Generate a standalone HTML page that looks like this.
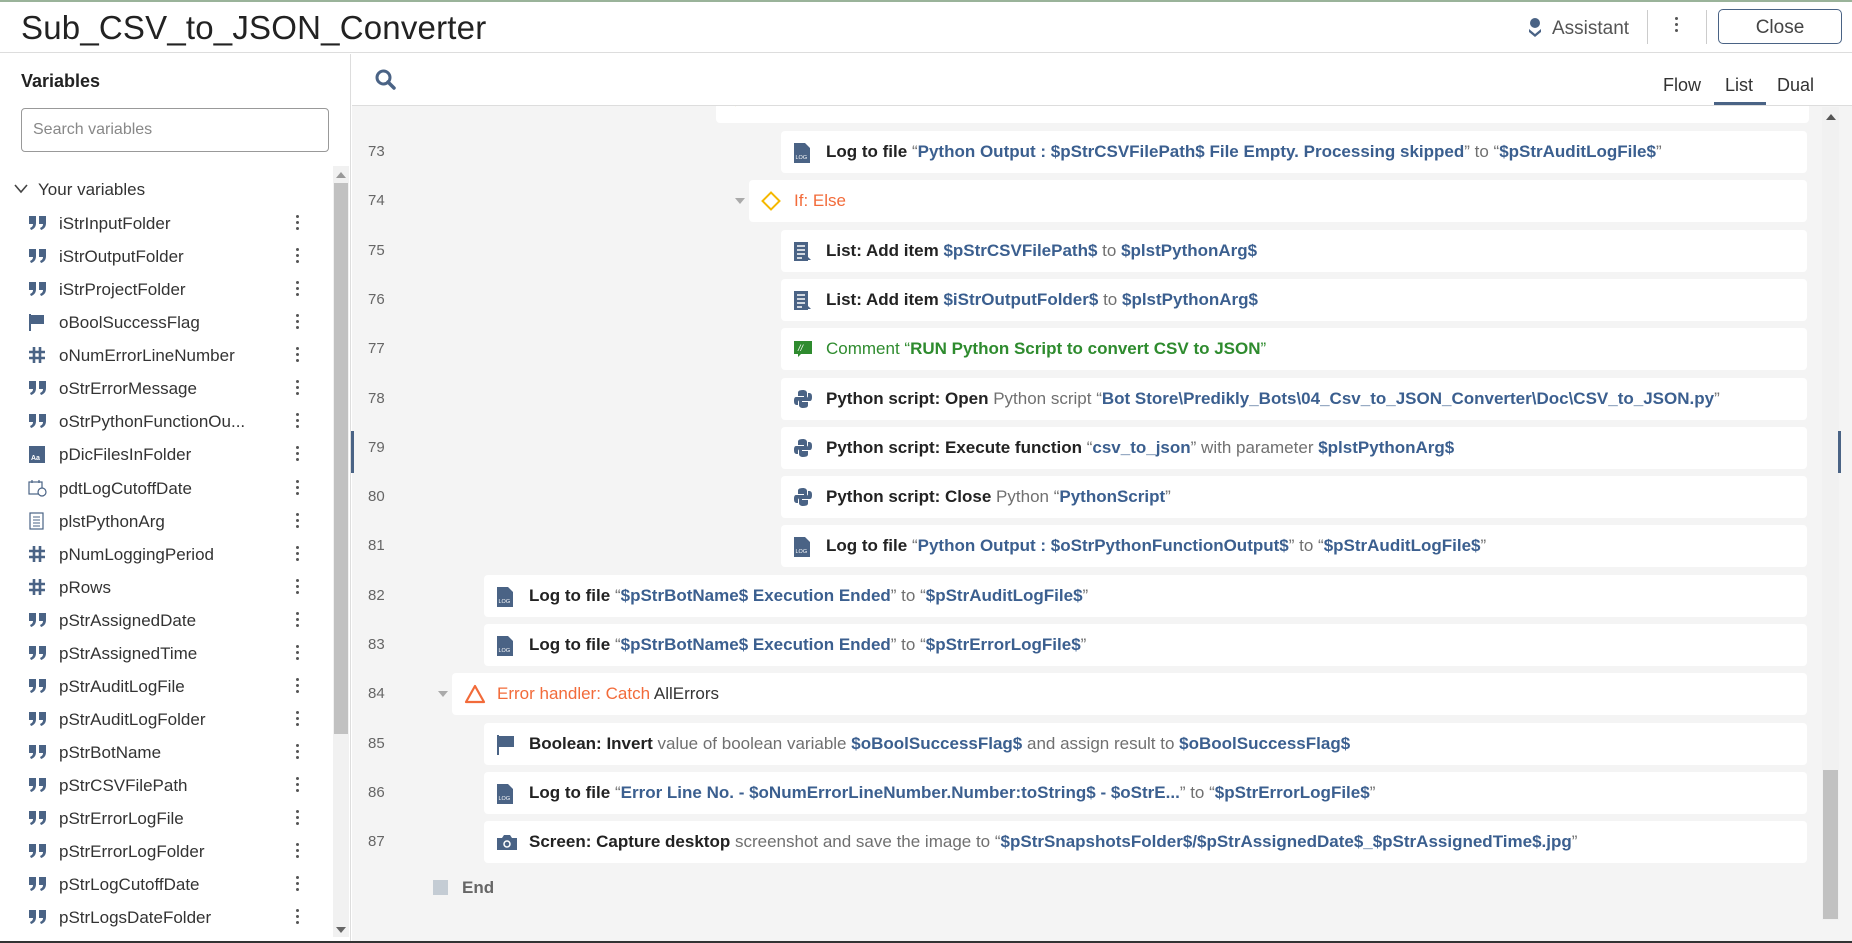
<!DOCTYPE html>
<html><head><meta charset="utf-8"><style>
*{box-sizing:border-box;margin:0;padding:0}
body{width:1852px;height:943px;overflow:hidden;background:#fff;font-family:"Liberation Sans",sans-serif;color:#2a2a2a;position:relative}
.a{position:absolute}
.topline{left:0;top:0;width:1852px;height:2px;background:#9ab39a}
.hdr{left:0;top:2px;width:1852px;height:51px;border-bottom:1px solid #ddd}
.title{left:21px;top:9px;font-size:33px;color:#222;letter-spacing:0.2px}
.side{left:0;top:54px;width:351px;height:889px;border-right:1px solid #ddd}
.vr{left:0;height:33px;width:330px;font-size:17px;color:#333}
.vr .ic{position:absolute;left:28px;top:8px;width:20px;height:18px;color:#4a6385;font-weight:bold;font-size:22px;line-height:18px}
.vr .nm{position:absolute;left:59px;top:8px}
.vr .dt{position:absolute;left:296px;top:9px;width:4px;height:16px}
.dt i{display:block;width:3px;height:3px;border-radius:50%;background:#555;margin-bottom:3px}
.main{left:352px;top:54px;width:1500px;height:889px;background:#f4f4f4}
.tool{left:352px;top:54px;width:1500px;height:52px;background:#fff;border-bottom:1px solid #ddd}
.ln{left:368px;font-size:15px;color:#666;width:30px}
.card{background:#fff;border-radius:4px;height:42px;right:45px;font-size:17px;white-space:nowrap}
.card .t{position:absolute;left:45px;top:11px}
.card .i{position:absolute;left:12px;top:11px;width:20px;height:20px}
b{font-weight:bold;color:#222}
.v{color:#3b5f8f;font-weight:bold}
.g{color:#707070}
.o{color:#f26b3a}
.gr{color:#2e8b2e}
.tri{width:0;height:0;border-left:5px solid transparent;border-right:5px solid transparent;border-top:6px solid #aaa}
</style></head><body>
<div class="a topline"></div>
<div class="a hdr"></div>
<div class="a title">Sub_CSV_to_JSON_Converter</div>
<svg class="a" style="left:1527px;top:17px" width="16" height="22" viewBox="0 0 16 22"><circle cx="8" cy="6" r="5" fill="#4a6385"/><path d="M2 12 L8 17 L14 12 L14 15 L8 20 L2 15Z" fill="#4a6385"/></svg>
<div class="a" style="left:1552px;top:18px;font-size:19px;color:#555">Assistant</div>
<div class="a" style="left:1647px;top:10px;width:1px;height:34px;background:#ccc"></div>
<div class="a dt" style="left:1675px;top:17px"><i></i><i></i><i></i></div>
<div class="a" style="left:1706px;top:10px;width:1px;height:34px;background:#ccc"></div>
<div class="a" style="left:1718px;top:9px;width:124px;height:35px;border:1px solid #4a6385;border-radius:5px;font-size:19px;color:#444;text-align:center;line-height:35px">Close</div>

<div class="a side"></div>
<div class="a" style="left:21px;top:71px;font-size:18px;font-weight:bold;color:#222">Variables</div>
<div class="a" style="left:21px;top:108px;width:308px;height:44px;border:1px solid #999;border-radius:4px;font-size:16px;color:#888;padding:12px 11px">Search variables</div>
<svg class="a" style="left:14px;top:184px" width="14" height="10" viewBox="0 0 14 10"><path d="M1 1 L7 8 L13 1" stroke="#444" stroke-width="1.6" fill="none"/></svg>
<div class="a" style="left:38px;top:180px;font-size:17px;color:#333">Your variables</div>
<div class="a" style="left:333px;top:166px;width:16px;height:771px;background:#f1f1f1"></div>
<div class="a" style="left:334px;top:183px;width:14px;height:551px;background:#c1c1c1"></div>
<div class="a tri" style="left:336px;top:172px;border-top:none;border-bottom:6px solid #999"></div>
<div class="a tri" style="left:336px;top:927px;border-top-color:#666"></div>

<div id="vars"></div>

<div class="a main"></div>
<div class="a card" style="left:716px;top:80px;height:43px;right:43px"><div style="position:absolute;left:14px;top:13px;width:11px;height:11px;border:2px solid #f5b800;transform:rotate(45deg)"></div></div>
<div class="a tool"></div>
<svg class="a" style="left:374px;top:68px" width="24" height="24" viewBox="0 0 24 24"><circle cx="9.5" cy="9.5" r="6.5" stroke="#4a6385" stroke-width="3" fill="none"/><path d="M14 14 L20 20" stroke="#4a6385" stroke-width="3.5" stroke-linecap="round"/></svg>
<div class="a" style="left:1663px;top:75px;font-size:18px;color:#333">Flow</div>
<div class="a" style="left:1725px;top:75px;font-size:18px;color:#333">List</div>
<div class="a" style="left:1714px;top:102px;width:52px;height:3px;background:#4a6385"></div>
<div class="a" style="left:1777px;top:75px;font-size:18px;color:#333">Dual</div>
<div class="a" style="left:1822px;top:107px;width:17px;height:813px;background:#f1f1f1"></div>
<div class="a" style="left:1823px;top:770px;width:15px;height:149px;background:#c1c1c1"></div>
<div class="a tri" style="left:1826px;top:114px;border-top:none;border-bottom:6px solid #555"></div>
<div class="a" style="left:351px;top:431px;width:3px;height:42px;background:#4a6385"></div>
<div class="a" style="left:1838px;top:431px;width:3px;height:42px;background:#4a6385"></div>

<div id="rows"></div>

<div class="a" style="left:433px;top:880px;width:15px;height:15px;background:#c4ccd4"></div>
<div class="a" style="left:462px;top:878px;font-size:17px;color:#666;font-weight:bold">End</div>
<div class="a" style="left:0;top:941px;width:1852px;height:2px;background:#333"></div>

<script>
const V=[["q","iStrInputFolder"],["q","iStrOutputFolder"],["q","iStrProjectFolder"],["f","oBoolSuccessFlag"],["h","oNumErrorLineNumber"],["q","oStrErrorMessage"],["q","oStrPythonFunctionOu..."],["d","pDicFilesInFolder"],["c","pdtLogCutoffDate"],["l","plstPythonArg"],["h","pNumLoggingPeriod"],["h","pRows"],["q","pStrAssignedDate"],["q","pStrAssignedTime"],["q","pStrAuditLogFile"],["q","pStrAuditLogFolder"],["q","pStrBotName"],["q","pStrCSVFilePath"],["q","pStrErrorLogFile"],["q","pStrErrorLogFolder"],["q","pStrLogCutoffDate"],["q","pStrLogsDateFolder"]];
const ic={
q:'<svg width="20" height="18" viewBox="0 0 20 18"><path d="M1 2H8V9C8 13 6 15 3 16L2 14C4 13 5 12 5 10H1Z" fill="#4a6385"/><path d="M11 2H18V9C18 13 16 15 13 16L12 14C14 13 15 12 15 10H11Z" fill="#4a6385"/></svg>',
f:'<svg width="18" height="18" viewBox="0 0 18 18"><path d="M2 1V18" stroke="#4a6385" stroke-width="2"/><path d="M3 2H16V11H3Z" fill="#4a6385"/></svg>',
h:'<svg width="18" height="18" viewBox="0 0 18 18"><path d="M6 1V17M12 1V17M1 6H17M1 12H17" stroke="#4a6385" stroke-width="2.6"/></svg>',
d:'<svg width="18" height="18"><rect x="1" y="1" width="16" height="17" fill="#4a6385"/><text x="3" y="15" font-size="7" fill="#fff" font-family="Liberation Sans">Aa</text></svg>',
c:'<svg width="20" height="18" viewBox="0 0 20 18"><rect x="1" y="3" width="13" height="12" fill="none" stroke="#4a6385" stroke-width="1.2"/><path d="M4 1V4M11 1V4" stroke="#4a6385" stroke-width="1.2"/><circle cx="14" cy="13" r="4" fill="#fff" stroke="#4a6385" stroke-width="1.2"/></svg>',
l:'<svg width="18" height="18" viewBox="0 0 18 18"><rect x="2" y="1" width="13" height="16" fill="none" stroke="#4a6385" stroke-width="1.2"/><path d="M5 5H12M5 8H12M5 11H12M5 14H12" stroke="#4a6385"/></svg>'};
let h='';V.forEach((v,i)=>{const y=206+i*33.07;
h+=`<div class="a vr" style="top:${y}px"><div class="ic">${ic[v[0]]}</div><div class="nm">${v[1]}</div><div class="dt"><i></i><i></i><i></i></div></div>`});
document.getElementById('vars').innerHTML=h;
const LOG='<svg width="18" height="22" viewBox="0 0 18 22"><path d="M1 1H12L17 6V21H1Z" fill="#4a6385"/><text x="2.5" y="17" font-size="5.5" fill="#fff" font-family="Liberation Sans">LOG</text></svg>';
const LST='<svg width="18" height="22" viewBox="0 0 18 22"><rect x="1" y="1" width="14" height="19" fill="#4a6385"/><path d="M4 5H12M4 9H12M4 13H12M4 17H9" stroke="#fff" stroke-width="1.5"/><path d="M13 14L18 19L14 19Z" fill="#4a6385"/></svg>';
const PY='<svg width="20" height="20" viewBox="0 0 20 20"><path d="M10 1C5 1 5 3 5 4V7H11V8H3C1 8 1 11 1 12C1 15 2 16 4 16H5V13C5 12 6 11 7 11H12C14 11 14 10 14 9V4C14 2 12 1 10 1Z" fill="#4a6385"/><path d="M10 19C15 19 15 17 15 16V13H9V12H17C19 12 19 9 19 8C19 5 18 4 16 4H15V7C15 8 14 9 13 9H8C6 9 6 10 6 11V16C6 18 8 19 10 19Z" fill="#4a6385"/></svg>';
const CM='<svg width="20" height="20" viewBox="0 0 20 20"><path d="M1 2H19V15H8L5 18V15H1Z" fill="#2e8b2e"/><text x="5" y="12" font-size="9" fill="#fff" font-style="italic" font-family="Liberation Sans">//</text></svg>';
const FL='<svg width="20" height="22" viewBox="0 0 20 22"><path d="M2 1V21" stroke="#4a6385" stroke-width="2"/><path d="M3 2H18V13H3Z" fill="#4a6385"/></svg>';
const CAM='<svg width="22" height="20" viewBox="0 0 22 20"><path d="M1 6H6L8 3H14L16 6H21V18H1Z" fill="#4a6385"/><circle cx="11" cy="12" r="3" fill="none" stroke="#fff" stroke-width="1.5"/></svg>';
const DIA='<div style="width:14px;height:14px;border:2.5px solid #f5b800;transform:rotate(45deg);margin:3px"></div>';
const TRI='<svg width="22" height="20" viewBox="0 0 22 20"><path d="M11 2L20 18H2Z" fill="none" stroke="#f26b3a" stroke-width="2.2" stroke-linejoin="round"/></svg>';
const R=[
[781,LOG,'<b>Log to file</b> <span class="g">“</span><span class="v">Python Output : $pStrCSVFilePath$ File Empty. Processing skipped</span><span class="g">” to “</span><span class="v">$pStrAuditLogFile$</span><span class="g">”</span>'],
[749,DIA,'<span class="o">If: Else</span>',1],
[781,LST,'<b>List: Add item</b> <span class="v">$pStrCSVFilePath$</span> <span class="g">to</span> <span class="v">$plstPythonArg$</span>'],
[781,LST,'<b>List: Add item</b> <span class="v">$iStrOutputFolder$</span> <span class="g">to</span> <span class="v">$plstPythonArg$</span>'],
[781,CM,'<span class="gr">Comment “<span style="font-weight:bold">RUN Python Script to convert CSV to JSON</span>”</span>'],
[781,PY,'<b>Python script: Open</b> <span class="g">Python script “</span><span class="v">Bot Store\\Predikly_Bots\\04_Csv_to_JSON_Converter\\Doc\\CSV_to_JSON.py</span><span class="g">”</span>'],
[781,PY,'<b>Python script: Execute function</b> <span class="g">“</span><span class="v">csv_to_json</span><span class="g">” with parameter</span> <span class="v">$plstPythonArg$</span>'],
[781,PY,'<b>Python script: Close</b> <span class="g">Python “</span><span class="v">PythonScript</span><span class="g">”</span>'],
[781,LOG,'<b>Log to file</b> <span class="g">“</span><span class="v">Python Output : $oStrPythonFunctionOutput$</span><span class="g">” to “</span><span class="v">$pStrAuditLogFile$</span><span class="g">”</span>'],
[484,LOG,'<b>Log to file</b> <span class="g">“</span><span class="v">$pStrBotName$ Execution Ended</span><span class="g">” to “</span><span class="v">$pStrAuditLogFile$</span><span class="g">”</span>'],
[484,LOG,'<b>Log to file</b> <span class="g">“</span><span class="v">$pStrBotName$ Execution Ended</span><span class="g">” to “</span><span class="v">$pStrErrorLogFile$</span><span class="g">”</span>'],
[452,TRI,'<span class="o">Error handler: Catch</span> <span style="color:#333">AllErrors</span>',1],
[484,FL,'<b>Boolean: Invert</b> <span class="g">value of boolean variable</span> <span class="v">$oBoolSuccessFlag$</span> <span class="g">and assign result to</span> <span class="v">$oBoolSuccessFlag$</span>'],
[484,LOG,'<b>Log to file</b> <span class="g">“</span><span class="v">Error Line No. - $oNumErrorLineNumber.Number:toString$ - $oStrE...</span><span class="g">” to “</span><span class="v">$pStrErrorLogFile$</span><span class="g">”</span>'],
[484,CAM,'<b>Screen: Capture desktop</b> <span class="g">screenshot and save the image to “</span><span class="v">$pStrSnapshotsFolder$/$pStrAssignedDate$_$pStrAssignedTime$.jpg</span><span class="g">”</span>']];
let r='';R.forEach((x,i)=>{const c=152+i*49.3;const t=c-21;
r+=`<div class="a ln" style="top:${c-9}px">${73+i}</div>`;
if(x[3])r+=`<div class="a tri" style="left:${x[0]-14}px;top:${c-3}px"></div>`;
r+=`<div class="a card" style="left:${x[0]}px;top:${t}px"><div class="i">${x[1]}</div><div class="t">${x[2]}</div></div>`;});
document.getElementById('rows').innerHTML=r;
</script>
</body></html>
